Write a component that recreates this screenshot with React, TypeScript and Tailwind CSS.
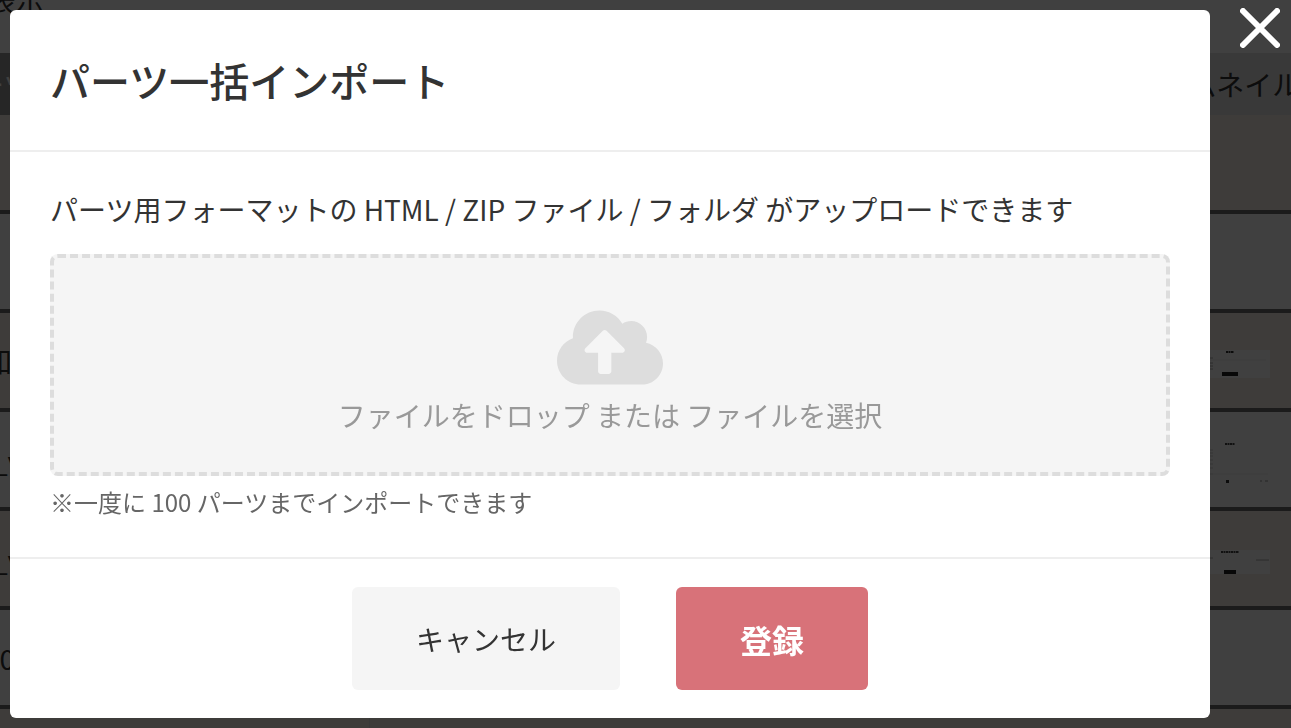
import { useState } from 'react';
import { FaCloudUploadAlt } from 'react-icons/fa';
import { clsx } from 'clsx';

type Thumb = 'form' | 'list' | 'article';

const rows: { id: number; name?: string; thumb?: Thumb }[] = [
  { id: 1 },
  { id: 2 },
  { id: 3, name: '知', thumb: 'form' },
  { id: 4, name: 'l_v', thumb: 'list' },
  { id: 5, name: 'l_v', thumb: 'article' },
  { id: 6, name: '10' },
  { id: 7 },
];

function Thumbnail({ kind }: { kind: Thumb }) {
  if (kind === 'form') {
    return (
      <svg className="block" width="120" height="28" viewBox="0 0 120 28" aria-hidden>
        <rect width="120" height="28" fill="#fff" />
        <path d="M76 2h8" stroke="#333" strokeWidth="2" strokeDasharray="2 .5" />
        <path d="M60 8h3M60 13h3M60 16h3M60 19h3" stroke="#aaa" />
        <path d="M60 10h56" stroke="#eee" />
        <rect x="72" y="22" width="16" height="4" fill="#222" />
      </svg>
    );
  }
  if (kind === 'list') {
    return (
      <svg className="block" width="120" height="42" viewBox="0 0 120 42" aria-hidden>
        <rect width="120" height="42" fill="#fff" />
        <path d="M75 2h10" stroke="#444" strokeWidth="2" strokeDasharray="2 .5" />
        <path d="M60 8h3M60 11h3M60 14h3M60 18h3M60 22h3M60 26h3M60 32h3" stroke="#ccc" />
        <path d="M60 32h58" stroke="#eee" />
        <rect x="76" y="38" width="3" height="3" fill="#333" />
        <path d="M110 39h2M115 39h3" stroke="#999" />
      </svg>
    );
  }
  return (
    <svg className="block" width="120" height="24" viewBox="0 0 120 24" aria-hidden>
      <rect width="120" height="24" fill="#fff" />
      <path d="M71 2h18" stroke="#444" strokeWidth="2" strokeDasharray="2 .5" />
      <path d="M60 8h3M106 10h13" stroke="#aaa" />
      <rect x="74" y="20" width="12" height="4" fill="#222" />
    </svg>
  );
}

function PartsPage() {
  return (
    <div className="-ml-6 -mr-5" aria-hidden>
      <div className="flex h-[53px] items-start pl-3">
        <p className="-mt-5 leading-10">表示</p>
      </div>
      <table className="w-full table-fixed border-separate border-spacing-0">
        <colgroup>
          <col className="w-[394px]" />
          <col />
          <col className="w-[161px]" />
        </colgroup>
        <thead>
          <tr className="h-[62px]">
            <th className="bg-[#989898] p-0 text-left font-normal text-white">ーツ</th>
            <th className="bg-[#e4e4e4] p-0" />
            <th className="bg-[#e4e4e4] p-0 font-normal">サムネイル</th>
          </tr>
        </thead>
        <tbody className="[&_td]:border-b-4 [&_td]:border-b-[#6c6c6c]">
          {rows.map((row) => (
            <tr
              key={row.id}
              className={clsx('h-[99px]', row.id % 2 === 1 ? 'bg-[#f8f0e8]' : 'bg-white')}
            >
              <td className="border-r border-r-[#e4e4e4] py-0 pr-0 pl-2">{row.name}</td>
              <td className="p-0" />
              <td className="p-0 pt-1.5">{row.thumb && <Thumbnail kind={row.thumb} />}</td>
            </tr>
          ))}
        </tbody>
      </table>
    </div>
  );
}

function ImportDialog({ onClose }: { onClose: () => void }) {
  return (
    <div className="fixed inset-0 flex items-start overflow-auto bg-black/75">
      <section
        role="dialog"
        aria-modal="true"
        aria-labelledby="import-title"
        className="my-2.5 ml-2.5 flex-1 rounded-md bg-white"
      >
        <header className="border-b-2 border-[#eee] px-10 py-10">
          <h1 id="import-title" className="text-[40px] leading-[60px] font-medium">
            パーツ一括インポート
          </h1>
        </header>

        <div className="px-10 pt-10 pb-[39px]">
          <p className="mb-7 leading-[34px]">
            パーツ用フォーマットの HTML / ZIP ファイル / フォルダ がアップロードできます
          </p>
          <label
            htmlFor="parts-file"
            className="flex cursor-pointer flex-col items-center rounded-lg border-4 border-dashed border-[#ddd] bg-[#f5f5f5] pt-[47px] pb-10"
          >
            <FaCloudUploadAlt className="h-[85px] w-[106px] text-[#ddd]" />
            <span className="mt-2 leading-[34px] text-[#999]">
              ファイルをドロップ または ファイルを選択
            </span>
            <input id="parts-file" type="file" multiple className="sr-only" />
          </label>
          <p className="mt-2.5 text-2xl leading-8 text-[#666]">
            ※一度に 100 パーツまでインポートできます
          </p>
        </div>

        <footer className="flex justify-center gap-14 border-t-2 border-[#eee] py-7">
          <button
            type="button"
            onClick={onClose}
            className="h-[103px] cursor-pointer rounded-md bg-[#f5f5f5] px-16"
          >
            キャンセル
          </button>
          <button
            type="button"
            className="h-[103px] cursor-pointer rounded-md bg-[#d87279] px-16 text-[32px] font-bold text-white"
          >
            登録
          </button>
        </footer>
      </section>

      <button
        type="button"
        onClick={onClose}
        aria-label="閉じる"
        className="mt-2 mr-[11px] ml-[30px] cursor-pointer text-white"
      >
        <svg
          className="size-10"
          viewBox="0 0 40 40"
          fill="none"
          stroke="currentColor"
          strokeWidth="6"
          strokeLinecap="round"
        >
          <path d="M3 3l34 34M37 3L3 37" />
        </svg>
      </button>
    </div>
  );
}

export default function App() {
  const [open, setOpen] = useState(true);

  return (
    <div className="h-screen overflow-hidden bg-white font-['Noto_Sans_CJK_JP',sans-serif] text-[28px] text-[#333]">
      <PartsPage />
      {open && <ImportDialog onClose={() => setOpen(false)} />}
    </div>
  );
}
